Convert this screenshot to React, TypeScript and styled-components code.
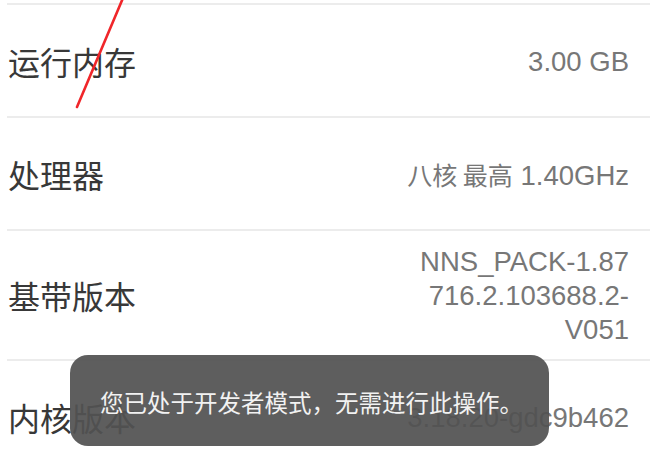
import React from "react";
import styled, { createGlobalStyle } from "styled-components";

const GlobalStyle = createGlobalStyle`
  html, body { margin: 0; padding: 0; background: #ffffff; }
  body { width: 650px; height: 456px; overflow: hidden; }
`;

const Page = styled.div`
  position: relative;
  width: 650px;
  height: 456px;
  overflow: hidden;
  background: #ffffff;
  padding-top: 3px;
  box-sizing: border-box;
`;

const List = styled.div`
  display: flex;
  flex-direction: column;
  margin-left: 7px;
  border-top: 2px solid #ececec;
`;

const Row = styled.div`
  display: flex;
  align-items: center;
  justify-content: space-between;
  min-height: 113px;
  padding: 12px 21px 12px 1px;
  box-sizing: border-box;
  border-bottom: 2px solid #ececec;
`;

const Label = styled.div`
  font-family: "Noto Sans CJK SC", "Noto Sans", sans-serif;
  font-size: 32px;
  color: #383838;
  line-height: 40px;
`;

const Value = styled.div`
  font-family: "Liberation Sans", Arial, "Noto Sans CJK SC", sans-serif;
  font-size: 27.5px;
  color: #777777;
  line-height: 34px;
  text-align: right;
  padding-top: 2px;
`;

const Cjk = styled.span`
  font-family: "Noto Sans CJK SC", sans-serif;
  font-size: 25px;
`;

const Toast = styled.div`
  position: absolute;
  left: 70px;
  top: 355px;
  width: 479px;
  height: 91px;
  border-radius: 18px;
  background: rgba(82, 82, 82, 0.93);
  display: flex;
  align-items: center;
  justify-content: center;
  padding-top: 3px;
  padding-left: 4px;
  box-sizing: border-box;
  font-family: "Noto Sans CJK SC", sans-serif;
  font-size: 23.5px;
  color: #f2f2f2;
`;

const Stroke = styled.svg`
  position: absolute;
  left: 0;
  top: 0;
  width: 160px;
  height: 120px;
  pointer-events: none;
`;

const rows: { label: string; value: React.ReactNode[] }[] = [
  { label: "运行内存", value: ["3.00 GB"] },
  {
    label: "处理器",
    value: [
      <>
        <Cjk>八核 最高</Cjk> 1.40GHz
      </>,
    ],
  },
  { label: "基带版本", value: ["NNS_PACK-1.87", "716.2.103688.2-", "V051"] },
  { label: "内核版本", value: ["3.18.20-gdc9b462"] },
];

export default function App() {
  return (
    <Page>
      <GlobalStyle />
      <List>
        {rows.map((r) => (
          <Row key={r.label}>
            <Label>{r.label}</Label>
            <Value>
              {r.value.map((v, i) => (
                <div key={i}>{v}</div>
              ))}
            </Value>
          </Row>
        ))}
      </List>
      <Stroke viewBox="0 0 160 120">
        <path
          d="M123 -2 L77 107"
          stroke="#f0262a"
          strokeWidth="2.6"
          strokeLinecap="round"
          fill="none"
        />
      </Stroke>
      <Toast>您已处于开发者模式，无需进行此操作。</Toast>
    </Page>
  );
}
